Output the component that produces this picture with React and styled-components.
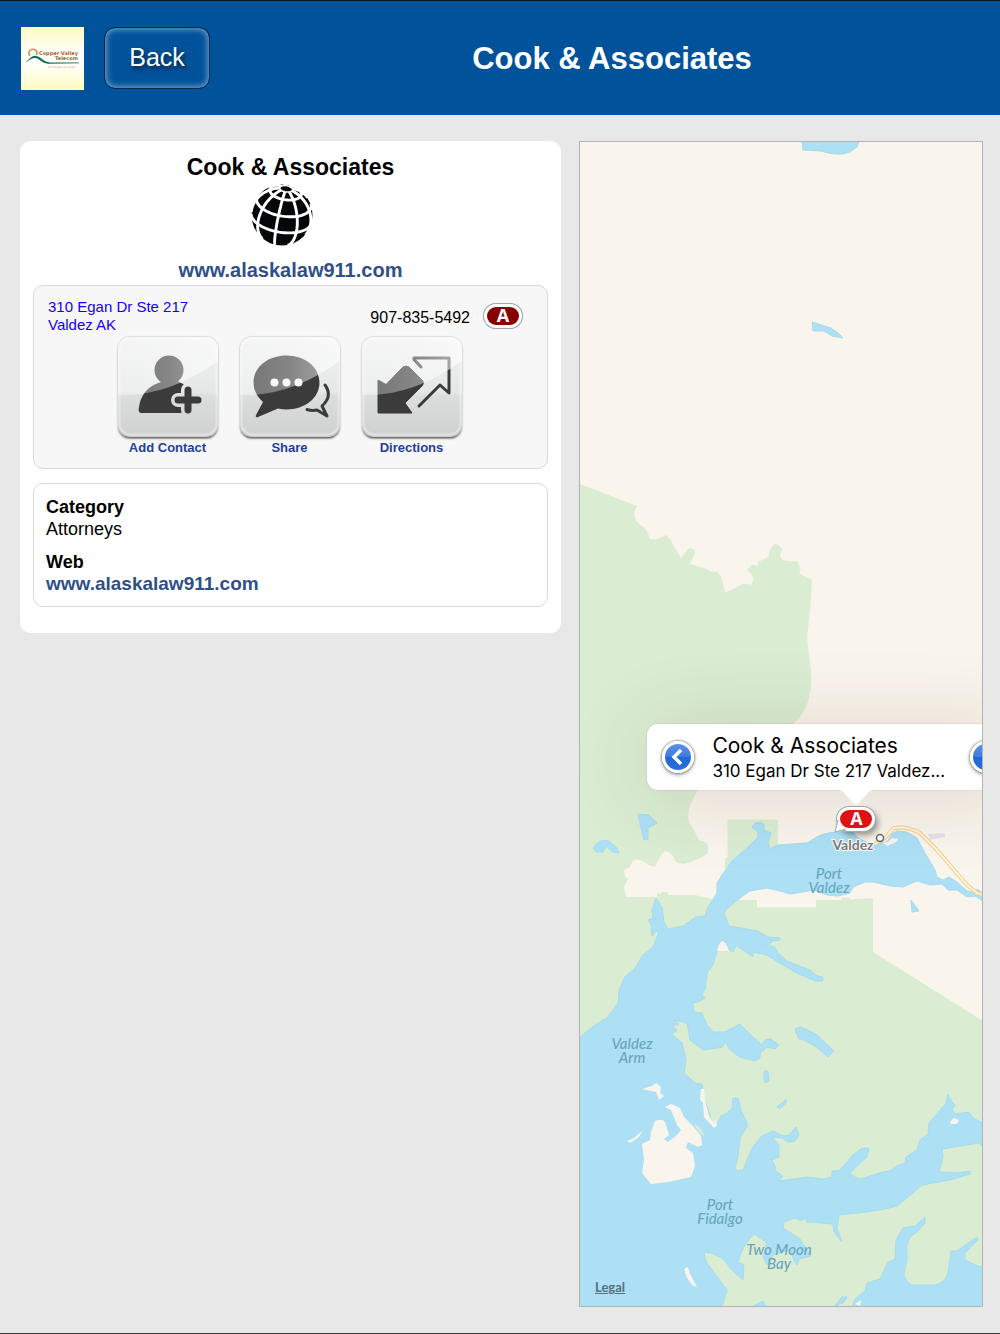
import React from "react";
import styled, { createGlobalStyle } from "styled-components";

const SANS = '"Liberation Sans", Arial, sans-serif';

const GlobalStyle = createGlobalStyle`
  * { box-sizing: border-box; }
  body { margin: 0; background: #e8e8e8; font-family: ${SANS}; color: #000; }
  h1, h2, h3, p, dl, dd, dt { margin: 0; }
  button { font: inherit; border: 0; padding: 0; background: none; cursor: pointer; }
  svg { display: block; }
`;

const Page = styled.div`
  display: flex;
  flex-direction: column;
  min-height: 100vh;
  border-top: 1px solid #06182c;
  border-bottom: 1px solid #3a3a3c;
`;

const Header = styled.header`
  display: flex;
  align-items: center;
  gap: 20px;
  height: 114px;
  padding: 0 6px 0 21px;
  background: #00529b;
`;

const LogoBox = styled.div`
  width: 63px;
  height: 63px;
  background: linear-gradient(#fffabf, #fffef4 35%, #ffffff 50%, #fffef4 65%, #fffabf);
`;

const BackButton = styled.button`
  width: 106px;
  height: 62px;
  padding-bottom: 2px;
  border: 1px solid #06254a;
  border-radius: 11px;
  background: #00529b;
  box-shadow: inset 0 0 6px 1px rgba(255, 255, 255, 0.5);
  color: #fff;
  font-size: 25px;
  text-shadow: 2px 3px 4px rgba(0, 0, 0, 0.6);
`;

const HeaderTitle = styled.h1`
  flex: 1;
  padding-top: 2px;
  color: #fff;
  font-size: 31px;
  line-height: 36px;
  text-align: center;
`;

const Main = styled.main`
  flex: 1;
  display: grid;
  grid-template-columns: 541fr 404fr;
  gap: 18px;
  padding: 26px 17px 26px 20px;
`;

const Card = styled.section`
  align-self: start;
  display: flex;
  flex-direction: column;
  align-items: center;
  padding: 11px 13px 26px;
  border-radius: 11px;
  background: #fff;
`;

const CardTitle = styled.h2`
  font-size: 23px;
  line-height: 30px;
`;

const GlobeArt = styled.svg`
  margin: 1px 17px 0 0;
`;

const WebLink = styled.a`
  color: #304f87;
  font-size: ${(p) => p.$size}px;
  line-height: ${(p) => p.$line}px;
  font-weight: bold;
  text-decoration: none;
`;

const SiteLink = styled(WebLink)`
  margin: 9px 0 1px;
`;

const Panel = styled.div`
  align-self: stretch;
  border: 1px solid #d9d9d9;
  border-radius: 10px;
`;

const ContactPanel = styled(Panel)`
  padding: 12px 24px 12px 14px;
  background: #f7f7f7;
`;

const ContactRow = styled.div`
  display: flex;
  align-items: center;
  gap: 13px;
`;

const Address = styled.a`
  flex: 1;
  color: #1400f5;
  font-size: 15px;
  line-height: 18px;
  text-decoration: none;
`;

const Phone = styled.span`
  padding-top: 3px;
  font-size: 16px;
  line-height: 18px;
`;

const Badge = styled.span`
  display: flex;
  align-items: center;
  justify-content: center;
  width: 38px;
  height: 24px;
  margin: 1px;
  padding-bottom: 2px;
  border: 3px solid #fff;
  border-radius: 12px;
  background: ${(p) => p.$color};
  box-shadow: 0 0 0 1px #a8a8a8, ${(p) => (p.$raised ? "3px 4px 6px rgba(0,0,0,.4)" : "0 0 1px 1px #ccc")};
  color: #fff;
  font: bold 18px/18px "Open Sans", sans-serif;
`;

const Actions = styled.div`
  display: flex;
  justify-content: center;
  gap: 20px;
  margin: 3px 0 0 8px;
`;

const Action = styled.button`
  display: flex;
  flex-direction: column;
  align-items: center;
  gap: 2px;
  width: 102px;
  color: #23409c;
  font-size: 13px;
  line-height: 16px;
  font-weight: bold;
`;

const Tile = styled.span`
  width: 100px;
  height: 99px;
  margin-bottom: 2px;
  border-radius: 12px;
  overflow: hidden;
  background: linear-gradient(#f0f1f1 0%, #e6e8e8 55%, #dcdedd 60%, #cfd1d0 100%);
  box-shadow: 0 0 1px 1px #dedede, 0 2px 1px #606060, 0 3px 2px #999;
`;

const DetailPanel = styled(Panel)`
  margin-top: 14px;
  padding: 12px 12px 11px;
`;

const Details = styled.dl`
  display: flex;
  flex-direction: column;
  gap: 11px;
`;

const Term = styled.dt`
  font-size: 18px;
  line-height: 22px;
  font-weight: bold;
`;

const Value = styled.dd`
  font-size: 18px;
  line-height: 22px;
`;

const MapPanel = styled.section`
  position: relative;
  overflow: hidden;
  min-height: 600px;
  border: 1px solid #b3b3b3;
  background: #f9f4ec;
`;

const MapArt = styled.svg`
  position: absolute;
  inset: 0;
  width: 100%;
  height: 100%;
`;

const Place = styled.text`
  fill: ${(p) => (p.$town ? "#7c7b78" : "#69a5bf")};
  font: ${(p) => (p.$town ? "bold 14px" : "italic 500 15px")} Lato, sans-serif;
  text-anchor: middle;
  ${(p) => p.$town && "paint-order: stroke; stroke: #fff; stroke-width: 2px;"}
`;

const Marker = styled.div`
  position: absolute;
  left: 69%;
  top: 57%;
  width: 0;
  height: 0;
`;

const Callout = styled.div`
  position: absolute;
  left: -210px;
  bottom: 15px;
  display: flex;
  align-items: center;
  gap: 18px;
  width: 370px;
  height: 66px;
  padding: 0 15px;
  border-radius: 11px;
  background: #fff;
  box-shadow: 0 4px 80px rgba(60, 40, 20, 0.15), 0 0 2px rgba(0, 0, 0, 0.15);
`;

const CalloutText = styled.div`
  flex: 1;
  min-width: 0;
  font-family: Inter, sans-serif;
  white-space: nowrap;
`;

const CalloutTitle = styled.h3`
  padding-top: 1px;
  font-size: 21px;
  line-height: 26px;
  font-weight: 400;
`;

const CalloutSub = styled.p`
  font-size: 17px;
  line-height: 24px;
`;

const StepButton = styled.button`
  display: grid;
  place-items: center;
  flex: none;
  width: 32px;
  height: 32px;
  border: 3px solid #fff;
  border-radius: 50%;
  background: linear-gradient(#5b93e6 0%, #3c7ade 50%, #1f66d6 51%, #2a6edb 100%);
  box-shadow: 0 0 2px 1px rgba(0, 0, 0, 0.3), 0 2px 4px rgba(0, 0, 0, 0.3);
`;

const Pointer = styled.svg`
  position: absolute;
  left: -20px;
  top: -16px;
`;

const Pin = styled.div`
  position: absolute;
  left: -21px;
  top: 1px;
`;

const PinTail = styled.svg`
  position: absolute;
  left: -2px;
  top: 12px;
`;

const Legal = styled.a`
  position: absolute;
  left: 15px;
  bottom: 11px;
  color: #54727f;
  font: bold 13px/16px Lato, sans-serif;
`;

function Logo() {
  return (
    <LogoBox>
      <svg width="63" height="63" viewBox="0 0 63 63" aria-label="Copper Valley Telecom">
        <path d="M9 29 A4 4 0 1 1 15.500 28" fill="none" stroke="#d9773a" strokeWidth="1.300" />
        <path d="M4 35.500 C8 33 11 28 15 29 C20 30 23 35 29 35.500 L58 35.400 L58 36.300 L27 36.800 C21 36 18 31.500 14.500 31 C11 30.500 9 33 4 35.500Z" fill="#0b6b54" />
        <text fontWeight="bold" fill="#a8622c" fontFamily="DejaVu Sans, sans-serif">
          <tspan x="18" y="28" fontSize="5">Copper Valley</tspan>
          <tspan x="34" y="33" fontSize="5">Telecom</tspan>
        </text>
        <text x="27" y="40.500" fontSize="2.600" fill="#d9905a" fontFamily="DejaVu Sans, sans-serif">The People You Know</text>
      </svg>
    </LogoBox>
  );
}

/* Orthographic globe: pole tilted toward the viewer and leaning to the right. */
const RAD = Math.PI / 180;
function project(theta, lon) {
  const t = theta * RAD;
  const l = lon * RAD;
  const x = Math.sin(t) * Math.sin(l);
  const y = Math.cos(t);
  const z = Math.sin(t) * Math.cos(l);
  const a = 29 * RAD;
  const y2 = y * Math.cos(a) - z * Math.sin(a);
  const z2 = y * Math.sin(a) + z * Math.cos(a);
  const r = 9 * RAD;
  return {
    x: 32 + 31 * (x * Math.cos(r) + y2 * Math.sin(r)),
    y: 32 - 31 * (y2 * Math.cos(r) - x * Math.sin(r)),
    front: z2 > 0,
  };
}
function trace(points) {
  let d = "";
  let pen = false;
  points.forEach((p) => {
    if (p.front) d += `${pen ? "L" : "M"}${p.x.toFixed(1)} ${p.y.toFixed(1)}`;
    pen = p.front;
  });
  return d;
}
const steps = (from, to, by) =>
  Array.from({ length: Math.round((to - from) / by) + 1 }, (_, i) => from + i * by);
const GLOBE_LINES = [
  ...[12, 31, 63, 95].map((t) => trace(steps(0, 360, 5).map((l) => project(t, l)))),
  ...steps(-7, 313, 40).map((l) => trace(steps(12, 150, 5).map((t) => project(t, l)))),
];

function Globe() {
  return (
    <GlobeArt width="64" height="64" viewBox="0 0 64 64" aria-hidden="true">
      <circle cx="32" cy="32" r="30.500" fill="#050708" />
      {GLOBE_LINES.map((d, i) => (
        <path key={i} d={d} fill="none" stroke="#fff" strokeWidth={i === 0 ? 1.5 : 2.9} />
      ))}
    </GlobeArt>
  );
}

const GLYPHS = {
  contact: (
    <>
      <mask id="plusGap">
        <rect width="100" height="100" fill="#fff" />
        <path d="M70 53V73M60 63H80" stroke="#000" strokeWidth="14" strokeLinecap="round" />
      </mask>
      <g mask="url(#plusGap)">
        <circle cx="51" cy="33" r="14.500" />
        <path d="M24 76C21 76 20 74 21 70C23 57 30 49 43 45Q45 43 43 38H59Q58 43 61 45Q68 47 72 56V76Z" />
      </g>
      <path d="M70 53V73M60 63H80" fill="none" strokeWidth="7" stroke="currentColor" strokeLinecap="round" />
    </>
  ),
  share: (
    <>
      <path d="M46.500 18.500C65 18.500 79.500 30 79.500 45.500S65 72.500 46.500 72.500Q42 72.500 38 71.500L18 80Q15 81 16 78L23 65C17 60 13.500 53 13.500 45.500C13.500 30 28 18.500 46.500 18.500Z" />
      <path d="M85 48Q93 59 82 69L87 79L77 73Q72 74 67 72.500" fill="none" stroke="currentColor" strokeWidth="3" strokeLinecap="round" strokeLinejoin="round" />
      <circle cx="34.500" cy="45.500" r="4" fill="#f2f3f3" />
      <circle cx="46.500" cy="45.500" r="4" fill="#f2f3f3" />
      <circle cx="58.500" cy="45.500" r="4" fill="#f2f3f3" />
    </>
  ),
  directions: (
    <>
      <path d="M16 43L24 47.500L41 30Q44 28 47 30L61 44Q62 47 60 49L43 66L50 76H16Z" stroke="currentColor" strokeLinejoin="round" />
      <path d="M59 30L52 22.500V21H87V56L78 48L57 69" fill="none" stroke="currentColor" strokeWidth="3" strokeLinecap="round" strokeLinejoin="round" />
    </>
  ),
};

function ActionTile({ glyph, label }) {
  return (
    <Action type="button">
      <Tile>
        <svg width="100" height="100" viewBox="0 0 100 100" color="#3b3b3b" fill="#3b3b3b" aria-hidden="true">
          <defs>
            <linearGradient id={`gloss-${glyph}`}>
              <stop offset="0" stopColor="#fff" stopOpacity=".28" />
              <stop offset="0.5" stopColor="#fff" stopOpacity=".38" />
              <stop offset="1" stopColor="#fff" stopOpacity=".58" />
            </linearGradient>
          </defs>
          {GLYPHS[glyph]}
          <path d="M0 58Q50 60 100 24V0H0Z" fill={`url(#gloss-${glyph})`} />
          <rect x="1.500" y="1.500" width="97" height="96" rx="11" fill="none" stroke="#fff" strokeOpacity=".35" strokeWidth="2" />
        </svg>
      </Tile>
      {label}
    </Action>
  );
}

const WATER = "#ade0f5";
const GREEN = "#daedd2";
const LAND = "#f9f4ec";

const FORESTS = [
  "M580 484L637 506Q633 512 635 518Q637 524 644 527Q648 532 650 539Q655 541 666 535Q671 539 673 545L681 558L689 548Q697 548 694 555L690 564L707 569L710 571.500H717Q721 575 722 580L725 592Q731 591 738 586Q746 582 751 585Q757 578 747 570L752 564.500L758 566V562L768 557Q770 547 775 543.500Q783 547 782 551Q778 556 783 560Q788 562 797 561Q800 564 800 574L812 580Q811 606 807 637L811 672Q813 700 800 717Q790 727 770 745L698 790Q682 815 692 827L699 840Q710 841 708 853Q700 860 683 864L676 862Q671 851 665 851Q661 853 655 867L649 865Q642 859 635 859.500Q630 864 630 867L624 870L625 877L628 879L624 887L626 897H657V893L661 894V892H668V895H695L712 899L700 960L580 1080Z",
  "M727.500 819.500H778V850L725 880V858L727.500 857Z",
  "M736 900H757V907.500H816V900H842V897.500H850V899.500L873 898V952L983 1021V1307H581V1200L700 900Z",
];

const SEA =
  "M580 1037L595 1025L607 1018L618 1003L619 990L625 977L635 968L643 955L653 947L659 932L656 931L652 936L651 925L648 920L653 918L652 910L656 898L662 907L664 922L668 929L683 926L696 917L705 916L708 907L717 893V883L722 875L732 861L748 847L758 837V832L752 827Q756 820 764 824V830L771 833L768 843L770 849L777 845L807 843L817 837Q825 831 853 832L858 838L873 845L887 842L892 834L897 831L907 832L917 838L925 853L935 870L937 877L943 880L949 877L957 882L967 891L974 893L977 889L983 893V901L975 896L967 897L957 890L948 890L942 884L930 885L917 881L903 887L890 886L873 882L865 882L853 887L850 893L838 896L827 895L813 890L797 893L790 894L780 891L767 888L750 891L740 898L728 908Q723 911 725 916L729 926L758 931L768 937L780 938V940L772 941L770 944H763L775 947L778 953L787 961L810 970L817 976L823 977V981L815 981L797 973L778 962L767 955L753 952V957L743 950L736 945L733 952L729 950Q724 940 722 941Q719 942 717 951L713 965L707 973L705 990L702 994L705 998L698 1002L693 1003L694 1012L702 1013L707 1025L713 1032H725L740 1024L753 1037L762 1045L765 1040L771 1039L779 1045L775 1049L767 1047L760 1053V1058L755 1061L740 1057L729 1049L725 1040L723 1047L703 1050L690 1040L687 1023L674 1020L679 1024L672 1026L677 1030L672 1034L682 1043L686 1060L684 1073L695 1083L702 1084L705 1100L712 1122L717 1124L721 1116L727 1113L732 1108L733 1098H738L741 1110L748 1125L740 1138L738 1157L735 1168L738 1171L743 1170L747 1160L752 1148L762 1136L773 1131L783 1136L789 1135L796 1127L799 1135L795 1141L788 1142L782 1138L772 1137L779 1145V1157L772 1160L776 1168L774 1170L783 1176L779 1181L807 1177L823 1179L832 1177V1171L840 1170L853 1155L862 1148H869L867 1157L861 1162L850 1173Q855 1179 861 1179L883 1172L890 1171L897 1166L905 1163L906 1157L917 1150L920 1140L928 1134L929 1123L946 1103L948 1094L952 1102L955 1105L952 1110L955 1114L969 1112L973 1118L983 1123V1147L979 1143L942 1149L943 1157L939 1172L957 1173L970 1171V1174L950 1180L922 1185L907 1198L897 1206L885 1209L867 1212L839 1215L837 1228L842 1242L834 1232L833 1224L807 1222L805 1218L801 1221L795 1218L784 1222L783 1228L800 1239L811 1256L799 1259L797 1265L794 1260L790 1250L773 1255L767 1265L763 1257L767 1243L755 1234L750 1238L742 1250L738 1262L744 1265L743 1280L733 1271L722 1258Q712 1252 704 1252Q705 1260 707 1263L727 1290L722 1307H580Z";

const LAKES = [
  "M983 1267L978 1266L965 1260V1253L978 1240L977 1237L957 1251L951 1251L948 1273Q945 1283 935 1285H912Q904 1281 904 1273L907 1260V1245Q909 1236 916 1233L925 1223V1217L915 1226L903 1228L896 1240L895 1259L888 1262L880 1279L867 1283L865 1291L855 1299L852 1307H983Z",
  "M802 141L803 150L821 151Q845 159 857 147L859 141Z",
  "M812 322L831 328Q839 333 843 338L832 336L824 331L813 331Z",
  "M638 814L649 815L657 823L648 828L648 839L644 840L640 824Z",
  "M593 848Q600 838 609 841L617 848L619 853L613 852L606 846L603 852H596Z",
  "M911 900L919 911L912 912Z",
  "M795 1029L801 1027L816 1034L834 1051L828 1057L818 1048L804 1040L799 1039Z",
  "M764 1072Q766 1069 768 1072L769 1081Q765 1084 764 1080Z",
  "M777 1107L782 1103L786 1099V1103L780 1109Z",
  "M835 1306L842 1297H847L843 1303Z",
  "M753 1306L763 1301L765 1306Z",
];

const ISLANDS = [
  "M642 1144L650 1140L651 1132L655 1121Q662 1118 665 1122L669 1135L664 1139L668 1142L677 1135L681 1130L677 1125L671 1110L665 1107L671 1104L680 1108L684 1117L693 1126L701 1136L702 1145L698 1147L688 1142L686 1148L693 1153L695 1166L691 1177L668 1182L651 1184L642 1173L644 1160Z",
  "M642 1089L652 1086L656 1083L661 1087L660 1093L664 1096L659 1100L656 1092Z",
  "M627 1141L634 1138L642 1131L639 1137L630 1143Z",
  "M701 1089L704 1089L706 1104L709 1116L714 1123L715 1119L717 1126L714 1128L704 1117L703 1103L700 1099Z",
  "M684 1269L688 1267L690 1274L697 1287L692 1285L687 1278Z",
  "M950 1122L954 1118L959 1120L957 1124H951Z",
  "M855 1304L861 1300L860 1306Z",
  "M883 843L888 842L892 838L898 839L896 842L887 846Z",
  "M717 951Q722 931 729 951Z",
];

const ROAD = "M875 844L885 838L894 828Q907 826 920 833L937 850L967 885L977 893L984 895";

const PLACES = [
  { x: 829, y: 879, lines: ["Port", "Valdez"] },
  { x: 632, y: 1049, lines: ["Valdez", "Arm"] },
  { x: 720, y: 1210, lines: ["Port", "Fidalgo"] },
  { x: 779, y: 1255, lines: ["Two Moon", "Bay"] },
];

function MapDrawing() {
  return (
    <MapArt viewBox="580 142 402 1164" preserveAspectRatio="xMidYMid slice" role="img" aria-label="Map of Valdez">
      {FORESTS.map((d) => <path key={d} d={d} fill={GREEN} />)}
      <path d="M928 834L945 833V837L930 840Z" fill="#e1e2e8" />
      <path d={SEA} fill={WATER} stroke="#a6dcee" strokeLinejoin="round" />
      {LAKES.map((d) => <path key={d} d={d} fill={WATER} stroke="#a6dcee" strokeLinejoin="round" />)}
      {ISLANDS.map((d) => <path key={d} d={d} fill={LAND} />)}
      <path d="M694 1124L700 1127L705 1136Q698 1133 694 1124Z" fill={GREEN} />
      <path d={ROAD} fill="none" stroke="#f3c98e" strokeWidth="4" strokeLinejoin="round" />
      <path d={ROAD} fill="none" stroke="#fff8d6" strokeWidth="2" strokeLinejoin="round" />
      <circle cx="880" cy="838" r="3.500" fill="#fff" stroke="#6d6a66" strokeWidth="1.500" />
      <Place $town x="853" y="850">Valdez</Place>
      {PLACES.map(({ x, y, lines }) => (
        <Place key={y}>
          <tspan x={x} y={y}>{lines[0]}</tspan>
          <tspan x={x} dy="14">{lines[1]}</tspan>
        </Place>
      ))}
    </MapArt>
  );
}

function Step({ label, d }) {
  return (
    <StepButton type="button" aria-label={label}>
      <svg width="22" height="22" viewBox="0 0 22 22">
        <path d={d} fill="none" stroke="#fff" strokeWidth="3.500" />
      </svg>
    </StepButton>
  );
}

export default function App() {
  return (
    <>
      <GlobalStyle />
      <Page>
        <Header>
          <Logo />
          <BackButton type="button">Back</BackButton>
          <HeaderTitle>Cook &amp; Associates</HeaderTitle>
        </Header>
        <Main>
          <Card>
            <CardTitle>Cook &amp; Associates</CardTitle>
            <Globe />
            <SiteLink href="#web" $size={20} $line={28}>www.alaskalaw911.com</SiteLink>
            <ContactPanel>
              <ContactRow>
                <Address href="#map">310 Egan Dr Ste 217<br />Valdez AK</Address>
                <Phone>907-835-5492</Phone>
                <Badge $color="#860000">A</Badge>
              </ContactRow>
              <Actions>
                <ActionTile glyph="contact" label="Add Contact" />
                <ActionTile glyph="share" label="Share" />
                <ActionTile glyph="directions" label="Directions" />
              </Actions>
            </ContactPanel>
            <DetailPanel>
              <Details>
                <div>
                  <Term>Category</Term>
                  <Value>Attorneys</Value>
                </div>
                <div>
                  <Term>Web</Term>
                  <Value><WebLink href="#web" $size={19} $line={22}>www.alaskalaw911.com</WebLink></Value>
                </div>
              </Details>
            </DetailPanel>
          </Card>
          <MapPanel id="map">
            <MapDrawing />
            <Marker>
              <Callout>
                <Step label="Previous" d="M14 4L7 11L14 18" />
                <CalloutText>
                  <CalloutTitle>Cook &amp; Associates</CalloutTitle>
                  <CalloutSub>310 Egan Dr Ste 217 Valdez...</CalloutSub>
                </CalloutText>
                <Step label="Next" d="M8 4L15 11L8 18" />
              </Callout>
              <Pointer width="38" height="17" viewBox="0 0 38 17" aria-hidden="true">
                <path d="M0 0Q5 1 9 6L17 15Q19 17 21 15L29 6Q33 1 38 0Z" fill="#fff" />
              </Pointer>
              <Pin>
                <PinTail width="14" height="16" viewBox="0 0 14 16" aria-hidden="true">
                  <path d="M4 2L1 14L12 11" fill="#fff" stroke="#a8a8a8" />
                </PinTail>
                <Badge $color="#dd1313" $raised>A</Badge>
              </Pin>
            </Marker>
            <Legal href="#legal">Legal</Legal>
          </MapPanel>
        </Main>
      </Page>
    </>
  );
}
